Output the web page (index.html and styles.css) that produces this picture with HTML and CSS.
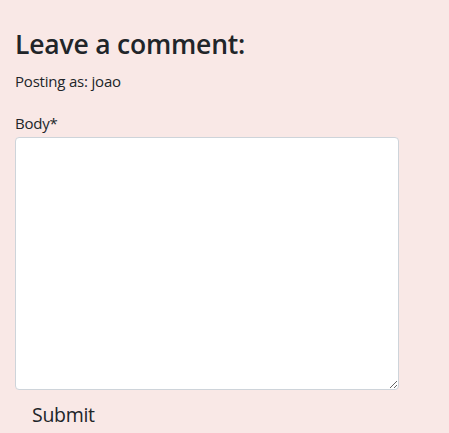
FILE: index.html
```html
<!DOCTYPE html>
<html>
<head>
<meta charset="utf-8">
<link rel="stylesheet" href="styles.css">
</head>
<body>
<div class="page">
  <h3 class="title">Leave a comment:</h3>
  <p class="posting">Posting as: joao</p>
  <form class="form">
    <label class="label" for="body">Body*</label>
    <textarea id="body" class="area"></textarea>
    <button type="button" class="submit">Submit</button>
  </form>
</div>
</body>
</html>
```
FILE: styles.css
```css
html, body {
  margin: 0;
  padding: 0;
  background: #f9e8e6;
  height: 100%;
  overflow: hidden;
}
.page {
  padding: 26px 15px 0 15px;
  font-family: "Open Sans", "Noto Sans", sans-serif;
  color: #212529;
}
.title {
  margin: 0;
  font-size: 26.5px;
  font-weight: 600;
  line-height: 36px;
  letter-spacing: -0.2px;
}
.posting {
  margin: 8px 0 0 0;
  font-size: 15px;
  line-height: 22px;
  letter-spacing: -0.2px;
}
.form {
  display: flex;
  flex-direction: column;
  align-items: flex-start;
  margin-top: 20px;
}
.label {
  font-size: 15px;
  line-height: 22px;
  letter-spacing: -0.2px;
  margin-bottom: 3px;
}
.area {
  box-sizing: border-box;
  width: 384px;
  height: 253px;
  margin: 0;
  border: 1px solid #ced4da;
  border-radius: 4px;
  background: #fff;
}
.submit {
  margin: 5px 0 0 1px;
  padding: 6px 16px;
  border: none;
  background: transparent;
  font-family: "Open Sans", "Noto Sans", sans-serif;
  font-size: 19.5px;
  line-height: 28px;
  color: #212529;
  letter-spacing: -0.3px;
}
```
